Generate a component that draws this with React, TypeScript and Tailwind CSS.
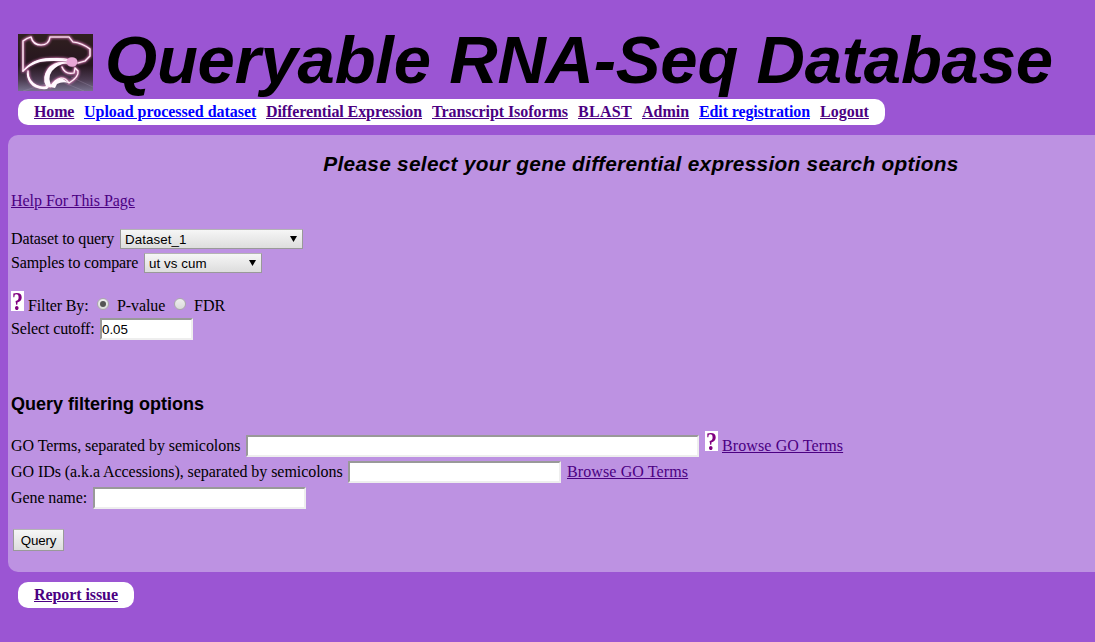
import type { ReactNode } from "react";

function Help() {
  return (
    <span className="flex h-5 w-[13px] shrink-0 items-center justify-center bg-white pt-0.5 text-[#800080]">
      <span className="scale-y-115 text-[22px] leading-5 font-bold">?</span>
    </span>
  );
}

function Link({ children, fresh, tracking = "" }: { children: ReactNode; fresh?: boolean; tracking?: string }) {
  return (
    <a href="#" className={(fresh ? "text-[#0000ff] underline " : "text-[#4b0082] underline ") + tracking}>
      {children}
    </a>
  );
}

function Select({ children, size }: { children: ReactNode; size: string }) {
  return (
    <button
      className={
        size +
        " flex h-5 items-center justify-between border border-[#999] border-t-[#b4b4b4] bg-linear-to-b from-[#f6f6f6] to-[#dddddd] pr-[5px] pl-1 font-['Liberation_Sans',sans-serif] text-[13.333px] leading-5 text-black"
      }
    >
      <span className="mt-0.5 tracking-[0.08px]">{children}</span>
      <svg width="7" height="6" viewBox="0 0 7 6">
        <path d="M0 0H7L3.5 6Z" />
      </svg>
    </button>
  );
}

function Field({ size, value }: { size: string; value?: string }) {
  return (
    <input
      type="text"
      defaultValue={value}
      className={
        size +
        " h-[22px] border-2 border-t-[#999] border-r-[#eee] border-b-[#eee] border-l-[#999] bg-white font-['Liberation_Sans',sans-serif] text-[13.333px] text-black outline-none"
      }
    />
  );
}

function Radio({ checked }: { checked?: boolean }) {
  return (
    <span className="mb-1 flex h-3 w-3 items-center justify-center rounded-full border border-[#aaa] bg-linear-to-b from-[#eeeeee] to-[#dadada]">
      {checked && <span className="h-1.5 w-1.5 rounded-full bg-[#555]" />}
    </span>
  );
}

function Logo() {
  return (
    <svg className="mt-[34px] shrink-0" width="75" height="57" viewBox="0 0 75 57">
      <defs>
        <linearGradient id="wall" x1="0" y1="0" x2="0" y2="1">
          <stop offset="0" stopColor="#30201f" />
          <stop offset=".55" stopColor="#26151f" />
          <stop offset=".8" stopColor="#4b3a50" />
          <stop offset="1" stopColor="#77718d" />
        </linearGradient>
        <filter id="glow" x="-20%" y="-20%" width="140%" height="140%">
          <feGaussianBlur stdDeviation="1.2" />
        </filter>
        <filter id="soft">
          <feGaussianBlur stdDeviation=".35" />
        </filter>
        <g id="cat" fill="none" strokeLinejoin="round" strokeLinecap="round">
          <path d="M5 37V7Q9 4 13 3Q15 11 23 11Q31 11 32 3L51 3L55 8Q64 9 72 15V22L67 27L60 29" />
          <path d="M5 37Q16 25 31 25Q43 24 52 26" />
          <path d="M10 37Q10 49 18 52Q24 55 30 52" />
          <path d="M56 31Q45 27 37 30Q26 35 28 48L32 53Q37 45 43 44Q48 44 51 49Q61 43 60 37L57 34L56 39Q47 41 44 33" />
        </g>
      </defs>
      <path fill="url(#wall)" d="M0 0H75V57H0Z" />
      <path d="M38 47L5 57M42 47L66 57M53 43L75 53" stroke="#b5a4c2" strokeWidth=".5" opacity=".5" />
      <use href="#cat" stroke="#d978b8" strokeWidth="3" opacity=".8" filter="url(#glow)" />
      <use href="#cat" stroke="#b97099" strokeWidth="2" filter="url(#soft)" />
      <use href="#cat" stroke="#fff5fc" strokeWidth="1.2" filter="url(#soft)" />
      <g fill="#fff8fe" filter="url(#soft)">
        <path d="M4 38Q15 23 34 24Q46 24 53 28Q35 26 22 28Q12 31 4 38Z" />
        <path d="M9 37Q12 48 19 51Q25 54 32 52L29 55Q17 56 12 49Q8 43 9 37Z" />
        <path d="M48 29Q38 28 31 34Q23 43 28 52L34 53Q29 44 34 37Q39 31 48 29Z" />
        <path d="M32 53Q38 43 45 45L51 49Q44 47 39 50L37 54Z" />
      </g>
      <ellipse cx="54" cy="28" rx="5.5" ry="4.8" fill="#e8a6d6" filter="url(#soft)" />
    </svg>
  );
}

const menu: { name: string; width: string; tracking: string; fresh?: boolean }[] = [
  { name: "Home", width: "w-10", tracking: "tracking-[-0.15px]" },
  { name: "Upload processed dataset", width: "w-[172px]", tracking: "tracking-[-0.03px]", fresh: true },
  { name: "Differential Expression", width: "w-[156px]", tracking: "tracking-[-0.09px]" },
  { name: "Transcript Isoforms", width: "w-[136px]", tracking: "tracking-[-0.06px]" },
  { name: "BLAST", width: "w-[54px]", tracking: "tracking-[0.3px]" },
  { name: "Admin", width: "w-[47px]", tracking: "" },
  { name: "Edit registration", width: "w-[111px]", tracking: "tracking-[-0.12px]", fresh: true },
  { name: "Logout", width: "w-[49px]", tracking: "" },
];

export default function App() {
  return (
    <div className="h-[642px] w-full overflow-hidden bg-[#9b55d3] font-['Liberation_Serif',serif] text-base leading-[18px] text-black">
      <header className="flex h-[99px] items-start pl-[18px]">
        <Logo />
        <h1 className="mt-[22px] ml-[12px] font-['Liberation_Sans',sans-serif] text-[67px] leading-[76px] font-bold tracking-[-0.21px] whitespace-nowrap italic">
          Queryable RNA-Seq Database
        </h1>
      </header>
      <nav className="ml-[18px] flex h-[26px] w-[867px] items-center gap-[10px] rounded-[10px] bg-white pl-4 font-bold whitespace-nowrap">
        {menu.map((item) => (
          <span key={item.name} className={item.width}>
            <Link fresh={item.fresh} tracking={item.tracking}>{item.name}</Link>
          </span>
        ))}
      </nav>
      <main className="mt-[10px] ml-2 h-[437px] w-[1266px] rounded-[10px] bg-[#bd92e2] pt-[17px] pl-[3px] whitespace-nowrap">
        <h2 className="h-10 pr-[3px] text-center font-['Liberation_Sans',sans-serif] text-[20.8px] leading-6 font-bold tracking-[0.3px] italic">
          Please select your gene differential expression search options
        </h2>
        <div className="h-[37px]"><Link tracking="tracking-[-0.04px]">Help For This Page</Link></div>
        <div className="flex h-6 items-start">
          <span className="mt-px w-[109px] tracking-[-0.1px]">Dataset to query</span>
          <Select size="w-[183px]">Dataset_1</Select>
        </div>
        <div className="flex h-[38px] items-start">
          <span className="mt-px w-[133px] tracking-[-0.14px]">Samples to compare</span>
          <Select size="w-[118px]">ut vs cum</Select>
        </div>
        <div className="flex h-[27px] items-start gap-1">
          <Help />
          <div className="mt-1.5 flex items-center">
            <span className="w-[69px] tracking-[-0.13px]">Filter By:</span>
            <Radio checked />
            <span className="ml-2 w-[57px] tracking-[-0.1px]">P-value</span>
            <Radio />
            <span className="ml-2">FDR</span>
          </div>
        </div>
        <div className="flex h-[75px] items-start">
          <span className="mt-0.5 w-[89px] tracking-[-0.13px]">Select cutoff:</span>
          <Field size="w-[93px]" value="0.05" />
        </div>
        <h3 className="h-[38px] font-['Liberation_Sans',sans-serif] text-[18px] leading-[22px] font-bold">Query filtering options</h3>
        <div className="flex h-[30px] items-start">
          <span className="mt-1.5 w-[235px] tracking-[-0.05px]">GO Terms, separated by semicolons</span>
          <div className="mt-1 flex"><Field size="w-[453px]" /></div>
          <div className="mr-1 ml-1.5"><Help /></div>
          <span className="mt-1.5"><Link tracking="tracking-[0.11px]">Browse GO Terms</Link></span>
        </div>
        <div className="flex h-[26px] items-start">
          <span className="mt-0.5 w-[337px] tracking-[-0.06px]">GO IDs (a.k.a Accessions), separated by semicolons</span>
          <Field size="w-[213px]" />
          <span className="mt-0.5 ml-1.5"><Link tracking="tracking-[0.11px]">Browse GO Terms</Link></span>
        </div>
        <div className="flex h-[42px] items-start">
          <span className="mt-0.5 w-[82px] tracking-[-0.08px]">Gene name:</span>
          <Field size="w-[213px]" />
        </div>
        <button className="ml-0.5 h-[22px] w-[51px] border border-[#999] border-t-[#b4b4b4] bg-linear-to-b from-[#f6f6f6] to-[#dddddd] pt-px font-['Liberation_Sans',sans-serif] text-[13.333px] leading-5 tracking-[-0.2px]">
          Query
        </button>
      </main>
      <footer className="mt-[10px] ml-[18px] flex h-[26px] w-[116px] items-center rounded-[10px] bg-white pl-4 font-bold">
        <Link tracking="tracking-[-0.08px]">Report issue</Link>
      </footer>
    </div>
  );
}
